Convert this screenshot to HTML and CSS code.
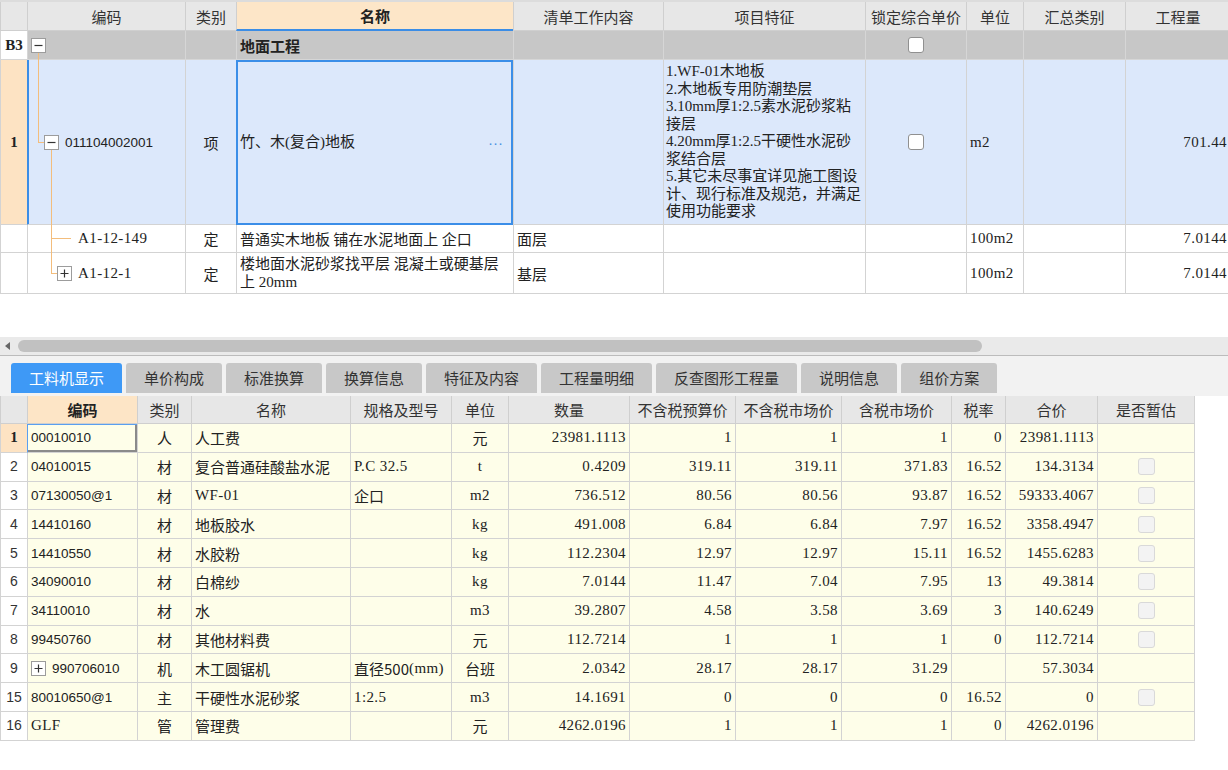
FILE: index.html
```html
<!DOCTYPE html>
<html lang="zh-CN">
<head>
<meta charset="utf-8">
<title>分部分项 - 工料机显示</title>
<link rel="stylesheet" href="styles.css">
</head>
<body>
<div class="app">
  <section class="top-pane">
    <div class="top-grid">
      <div class="row trow head">
        <div class="cell"></div>
        <div class="cell">编码</div>
        <div class="cell">类别</div>
        <div class="cell sel-col">名称</div>
        <div class="cell">清单工作内容</div>
        <div class="cell">项目特征</div>
        <div class="cell">锁定综合单价</div>
        <div class="cell">单位</div>
        <div class="cell">汇总类别</div>
        <div class="cell">工程量</div>
      </div>

      <div class="row trow b3">
        <div class="cell rn bold-lat">B3</div>
        <div class="cell tree pl3">
          <i class="ln v b3-v"></i>
          <svg class="box" width="15" height="15" viewBox="0 0 15 15"><rect x="0.5" y="0.5" width="14" height="14" fill="#fff" stroke="#9c9c9c"/><path d="M3.5 7.5H11.5" stroke="#333" stroke-width="1.2"/></svg>
        </div>
        <div class="cell"></div>
        <div class="cell bold">地面工程</div>
        <div class="cell"></div>
        <div class="cell"></div>
        <div class="cell c"><span class="cb"></span></div>
        <div class="cell"></div>
        <div class="cell"></div>
        <div class="cell"></div>
      </div>

      <div class="row trow r1">
        <div class="cell rn cur bold-lat">1</div>
        <div class="cell tree pl16 cur-left">
          <i class="ln v r1-a"></i>
          <i class="ln h r1-b"></i>
          <i class="ln v r1-c"></i>
          <svg class="box" width="15" height="15" viewBox="0 0 15 15"><rect x="0.5" y="0.5" width="14" height="14" fill="#fff" stroke="#9c9c9c"/><path d="M3.5 7.5H11.5" stroke="#333" stroke-width="1.2"/></svg>
          <span class="code gap6">011104002001</span>
        </div>
        <div class="cell c">项</div>
        <div class="cell focus name-cell"><span class="lat-mix">竹、木(复合)地板</span><span class="more">···</span></div>
        <div class="cell"></div>
        <div class="cell feature lat-mix">1.WF-01木地板<br>2.木地板专用防潮垫层<br>3.10mm厚1:2.5素水泥砂浆粘<br>接层<br>4.20mm厚1:2.5干硬性水泥砂<br>浆结合层<br>5.其它未尽事宜详见施工图设<br>计、现行标准及规范，并满足<br>使用功能要求</div>
        <div class="cell c"><span class="cb"></span></div>
        <div class="cell lat">m2</div>
        <div class="cell"></div>
        <div class="cell r lat">701.44</div>
      </div>

      <div class="row trow r2">
        <div class="cell rn"></div>
        <div class="cell tree pl50">
          <i class="ln v r2-a"></i>
          <i class="ln h r2-b"></i>
          <span class="lat">A1-12-149</span>
        </div>
        <div class="cell c">定</div>
        <div class="cell">普通实木地板 铺在水泥地面上 企口</div>
        <div class="cell">面层</div>
        <div class="cell"></div>
        <div class="cell"></div>
        <div class="cell lat">100m2</div>
        <div class="cell"></div>
        <div class="cell r lat">7.0144</div>
      </div>

      <div class="row trow r3">
        <div class="cell rn"></div>
        <div class="cell tree pl29">
          <i class="ln v r3-a"></i>
          <i class="ln h r3-b"></i>
          <svg class="box" width="15" height="15" viewBox="0 0 15 15"><rect x="0.5" y="0.5" width="14" height="14" fill="#fff" stroke="#9c9c9c"/><path d="M3.5 7.5H11.5M7.5 3.5V11.5" stroke="#333" stroke-width="1.2"/></svg>
          <span class="lat gap6">A1-12-1</span>
        </div>
        <div class="cell c">定</div>
        <div class="cell wrap lat-mix">楼地面水泥砂浆找平层 混凝土或硬基层<br>上 20mm</div>
        <div class="cell">基层</div>
        <div class="cell"></div>
        <div class="cell"></div>
        <div class="cell lat">100m2</div>
        <div class="cell"></div>
        <div class="cell r lat">7.0144</div>
      </div>
    </div>
    <div class="blank"></div>
    <div class="hscroll"><span class="arrow"></span><span class="thumb"></span></div>
  </section>

  <nav class="tabs">
    <span class="tab active">工料机显示</span>
    <span class="tab">单价构成</span>
    <span class="tab">标准换算</span>
    <span class="tab">换算信息</span>
    <span class="tab">特征及内容</span>
    <span class="tab">工程量明细</span>
    <span class="tab">反查图形工程量</span>
    <span class="tab">说明信息</span>
    <span class="tab">组价方案</span>
  </nav>

  <section class="bottom-pane">
    <div class="row brow bhead">
      <div class="cell"></div>
      <div class="cell sel-head">编码</div>
      <div class="cell">类别</div>
      <div class="cell">名称</div>
      <div class="cell">规格及型号</div>
      <div class="cell">单位</div>
      <div class="cell">数量</div>
      <div class="cell">不含税预算价</div>
      <div class="cell">不含税市场价</div>
      <div class="cell">含税市场价</div>
      <div class="cell">税率</div>
      <div class="cell">合价</div>
      <div class="cell">是否暂估</div>
    </div>

    <div class="row brow">
      <div class="cell rn cur bold-lat">1</div>
      <div class="cell code sel-cell">00010010</div>
      <div class="cell c">人</div>
      <div class="cell">人工费</div>
      <div class="cell"></div>
      <div class="cell c">元</div>
      <div class="cell r lat">23981.1113</div>
      <div class="cell r lat">1</div>
      <div class="cell r lat">1</div>
      <div class="cell r lat">1</div>
      <div class="cell r lat">0</div>
      <div class="cell r lat">23981.1113</div>
      <div class="cell"></div>
    </div>

    <div class="row brow">
      <div class="cell rn">2</div>
      <div class="cell code">04010015</div>
      <div class="cell c">材</div>
      <div class="cell">复合普通硅酸盐水泥</div>
      <div class="cell lat">P.C 32.5</div>
      <div class="cell c lat">t</div>
      <div class="cell r lat">0.4209</div>
      <div class="cell r lat">319.11</div>
      <div class="cell r lat">319.11</div>
      <div class="cell r lat">371.83</div>
      <div class="cell r lat">16.52</div>
      <div class="cell r lat">134.3134</div>
      <div class="cell c"><span class="cb-soft"></span></div>
    </div>

    <div class="row brow">
      <div class="cell rn">3</div>
      <div class="cell code">07130050@1</div>
      <div class="cell c">材</div>
      <div class="cell lat">WF-01</div>
      <div class="cell">企口</div>
      <div class="cell c lat">m2</div>
      <div class="cell r lat">736.512</div>
      <div class="cell r lat">80.56</div>
      <div class="cell r lat">80.56</div>
      <div class="cell r lat">93.87</div>
      <div class="cell r lat">16.52</div>
      <div class="cell r lat">59333.4067</div>
      <div class="cell c"><span class="cb-soft"></span></div>
    </div>

    <div class="row brow">
      <div class="cell rn">4</div>
      <div class="cell code">14410160</div>
      <div class="cell c">材</div>
      <div class="cell">地板胶水</div>
      <div class="cell"></div>
      <div class="cell c lat">kg</div>
      <div class="cell r lat">491.008</div>
      <div class="cell r lat">6.84</div>
      <div class="cell r lat">6.84</div>
      <div class="cell r lat">7.97</div>
      <div class="cell r lat">16.52</div>
      <div class="cell r lat">3358.4947</div>
      <div class="cell c"><span class="cb-soft"></span></div>
    </div>

    <div class="row brow">
      <div class="cell rn">5</div>
      <div class="cell code">14410550</div>
      <div class="cell c">材</div>
      <div class="cell">水胶粉</div>
      <div class="cell"></div>
      <div class="cell c lat">kg</div>
      <div class="cell r lat">112.2304</div>
      <div class="cell r lat">12.97</div>
      <div class="cell r lat">12.97</div>
      <div class="cell r lat">15.11</div>
      <div class="cell r lat">16.52</div>
      <div class="cell r lat">1455.6283</div>
      <div class="cell c"><span class="cb-soft"></span></div>
    </div>

    <div class="row brow">
      <div class="cell rn">6</div>
      <div class="cell code">34090010</div>
      <div class="cell c">材</div>
      <div class="cell">白棉纱</div>
      <div class="cell"></div>
      <div class="cell c lat">kg</div>
      <div class="cell r lat">7.0144</div>
      <div class="cell r lat">11.47</div>
      <div class="cell r lat">7.04</div>
      <div class="cell r lat">7.95</div>
      <div class="cell r lat">13</div>
      <div class="cell r lat">49.3814</div>
      <div class="cell c"><span class="cb-soft"></span></div>
    </div>

    <div class="row brow">
      <div class="cell rn">7</div>
      <div class="cell code">34110010</div>
      <div class="cell c">材</div>
      <div class="cell">水</div>
      <div class="cell"></div>
      <div class="cell c lat">m3</div>
      <div class="cell r lat">39.2807</div>
      <div class="cell r lat">4.58</div>
      <div class="cell r lat">3.58</div>
      <div class="cell r lat">3.69</div>
      <div class="cell r lat">3</div>
      <div class="cell r lat">140.6249</div>
      <div class="cell c"><span class="cb-soft"></span></div>
    </div>

    <div class="row brow">
      <div class="cell rn">8</div>
      <div class="cell code">99450760</div>
      <div class="cell c">材</div>
      <div class="cell">其他材料费</div>
      <div class="cell"></div>
      <div class="cell c">元</div>
      <div class="cell r lat">112.7214</div>
      <div class="cell r lat">1</div>
      <div class="cell r lat">1</div>
      <div class="cell r lat">1</div>
      <div class="cell r lat">0</div>
      <div class="cell r lat">112.7214</div>
      <div class="cell c"><span class="cb-soft"></span></div>
    </div>

    <div class="row brow">
      <div class="cell rn">9</div>
      <div class="cell code pl3">
        <svg class="box" width="15" height="15" viewBox="0 0 15 15"><rect x="0.5" y="0.5" width="14" height="14" fill="#fff" stroke="#9c9c9c"/><path d="M3.5 7.5H11.5M7.5 3.5V11.5" stroke="#333" stroke-width="1.2"/></svg>
        <span class="gap6">990706010</span>
      </div>
      <div class="cell c">机</div>
      <div class="cell">木工圆锯机</div>
      <div class="cell">直径500<span class="lat">(mm)</span></div>
      <div class="cell c">台班</div>
      <div class="cell r lat">2.0342</div>
      <div class="cell r lat">28.17</div>
      <div class="cell r lat">28.17</div>
      <div class="cell r lat">31.29</div>
      <div class="cell r lat"></div>
      <div class="cell r lat">57.3034</div>
      <div class="cell"></div>
    </div>

    <div class="row brow">
      <div class="cell rn">15</div>
      <div class="cell code">80010650@1</div>
      <div class="cell c">主</div>
      <div class="cell">干硬性水泥砂浆</div>
      <div class="cell lat">1:2.5</div>
      <div class="cell c lat">m3</div>
      <div class="cell r lat">14.1691</div>
      <div class="cell r lat">0</div>
      <div class="cell r lat">0</div>
      <div class="cell r lat">0</div>
      <div class="cell r lat">16.52</div>
      <div class="cell r lat">0</div>
      <div class="cell c"><span class="cb-soft"></span></div>
    </div>

    <div class="row brow">
      <div class="cell rn">16</div>
      <div class="cell lat">GLF</div>
      <div class="cell c">管</div>
      <div class="cell">管理费</div>
      <div class="cell"></div>
      <div class="cell c">元</div>
      <div class="cell r lat">4262.0196</div>
      <div class="cell r lat">1</div>
      <div class="cell r lat">1</div>
      <div class="cell r lat">1</div>
      <div class="cell r lat">0</div>
      <div class="cell r lat">4262.0196</div>
      <div class="cell"></div>
    </div>
  </section>
</div>
</body>
</html>
```

FILE: styles.css
```css
* { box-sizing: border-box; }
html, body { margin: 0; padding: 0; }
body {
  width: 1228px;
  height: 770px;
  overflow: hidden;
  background: #ffffff;
  font-family: "Noto Sans CJK SC", sans-serif;
  font-size: 15px;
  color: #222;
}
.app { width: 1228px; height: 770px; overflow: hidden; }

/* ---------- generic grid rows ---------- */
.row { display: grid; }
.cell {
  display: flex;
  align-items: center;
  padding: 0 2px 0 3px;
  border-left: 1px solid #d3d3d3;
  border-bottom: 1px solid #d3d3d3;
  line-height: 17px;
  white-space: nowrap;
  overflow: hidden;
  min-width: 0;
}
.c { justify-content: center; padding: 0; }
.r { justify-content: flex-end; padding-right: 3px; }
.lat { font-family: "Liberation Serif", "Noto Sans CJK SC", serif; letter-spacing: 0.4px; }
.lat-mix { font-family: "Liberation Serif", "Noto Sans CJK SC", serif; }
.bold { font-weight: 700; }
.bold-lat { font-family: "Liberation Serif", serif; font-weight: 700; justify-content: center; padding: 0; }
.code { font-family: "Liberation Sans", "Noto Sans CJK SC", sans-serif; font-size: 13.5px; }
.gap6 { margin-left: 6px; }
.box { display: block; flex: none; }

/* ---------- top pane ---------- */
.top-pane { border-top: 2px solid #dcdcdc; overflow: hidden; }
.top-grid { width: 1230px; }
.trow { grid-template-columns: 27px 158px 51px 277px 150px 202px 101px 57px 102px 105px; width: 1230px; }
.trow.head { height: 29px; }
.trow.head .cell { justify-content: center; padding: 0; background: #e7e7e7; color: #333; border-color: #cfcfcf; }
.trow.head .cell.sel-col { background: #fde6c8; font-weight: 700; color: #222; border-bottom: 2px solid #3b8de6; }

.trow.b3 { height: 29px; }
.trow.b3 .cell { background: #c7c7c7; border-left-color: #d6d6d6; border-bottom-color: #d6d6d6; }
.trow.b3 .cell.rn { background: #ffffff; }

.trow.r1 { height: 165px; }
.trow.r1 .cell { background: #dce8fb; }
.trow.r1 .cell.rn.cur { background: #fde3c3; }
.trow.r2 { height: 28px; }
.trow.r3 { height: 41px; }

.cur { background: #fde3c3; }
.cur-left { border-left: 1px solid #3b8de6; box-shadow: inset 1px 0 0 #3b8de6; }
.focus { outline: 2px solid #3b8ee8; outline-offset: -2px; }
.name-cell { justify-content: space-between; padding-right: 10px; }
.more { font-family: "Liberation Sans", sans-serif; color: #4a90e2; font-size: 15px; letter-spacing: 0; }
.feature { align-items: flex-start; white-space: normal; padding: 3px 1px 0 2px; line-height: 17.5px; }
.wrap { white-space: normal; line-height: 18px; }

.tree { position: relative; overflow: visible; }
.pl3 { padding-left: 3px; }
.pl16 { padding-left: 16px; }
.pl29 { padding-left: 29px; }
.pl50 { padding-left: 50px; }
.ln { position: absolute; background: #f3bd7c; }
.ln.v { width: 1px; }
.ln.h { height: 1px; }
.b3-v { left: 10px; top: 22px; bottom: -1px; }
.r1-a { left: 10px; top: 0; height: 82px; }
.r1-b { left: 10px; top: 82px; width: 6px; }
.r1-c { left: 23px; top: 90px; bottom: -1px; }
.r2-a { left: 23px; top: 0; bottom: -1px; }
.r2-b { left: 23px; top: 13px; width: 20px; }
.r3-a { left: 23px; top: 0; height: 20px; }
.r3-b { left: 23px; top: 20px; width: 6px; }

.cb {
  display: block;
  width: 16px;
  height: 16px;
  border: 1px solid #909090;
  border-radius: 3px;
  background: #ffffff;
}

.blank { height: 43px; }
.hscroll {
  height: 19px;
  background: #eaeaea;
  border-bottom: 1px solid #bcbcbc;
  display: flex;
  align-items: center;
  padding: 0 0 1px 5px;
}
.arrow {
  width: 0;
  height: 0;
  border-top: 4px solid transparent;
  border-bottom: 4px solid transparent;
  border-right: 5px solid #666;
}
.thumb {
  margin-left: 8px;
  width: 964px;
  height: 12px;
  border-radius: 6px;
  background: #c1c1c1;
}

/* ---------- tabs ---------- */
.tabs {
  height: 40px;
  display: flex;
  align-items: flex-start;
  gap: 4px;
  padding: 7px 0 0 11px;
  background: #f2f2f2;
}
.tab {
  height: 30px;
  line-height: 30px;
  padding: 0 18px;
  background: #c8c8c8;
  color: #333;
  border-radius: 3px 3px 0 0;
  white-space: nowrap;
}
.tab.active { background: #3e99f6; color: #ffffff; }

/* ---------- bottom pane ---------- */
.bottom-pane { width: 1195px; }
.brow {
  grid-template-columns: 27px 110px 54px 159px 101px 57px 121px 106px 106px 110px 54px 92px 98px;
  height: 28.8px;
}
.brow .cell { background: #fefee9; }
.brow .cell:last-child { border-right: 1px solid #d3d3d3; }
.brow .cell.rn {
  background: #ffffff;
  justify-content: center;
  padding: 0;
  font-family: "Liberation Sans", sans-serif;
  font-size: 14px;
  color: #333;
}
.brow .cell.rn.cur { background: #fde3c3; font-family: "Liberation Serif", serif; font-size: 15px; color: #222; }
.bhead { height: 28px; }
.bhead .cell { background: #e7e7e7 !important; justify-content: center; padding: 0; color: #333; border-color: #cfcfcf; }
.bhead .cell.sel-head { background: #fde5c6 !important; font-weight: 700; color: #222; }
.sel-cell {
  border-left-color: #5a9ff0;
  box-shadow: inset 0 1px 0 #5a9ff0, inset -2px -2px 0 #8a8a8a;
}
.cb-soft {
  display: block;
  width: 17px;
  height: 17px;
  border: 1px solid #d9d9d9;
  border-radius: 3px;
  background: #f3f3f3;
}
```
